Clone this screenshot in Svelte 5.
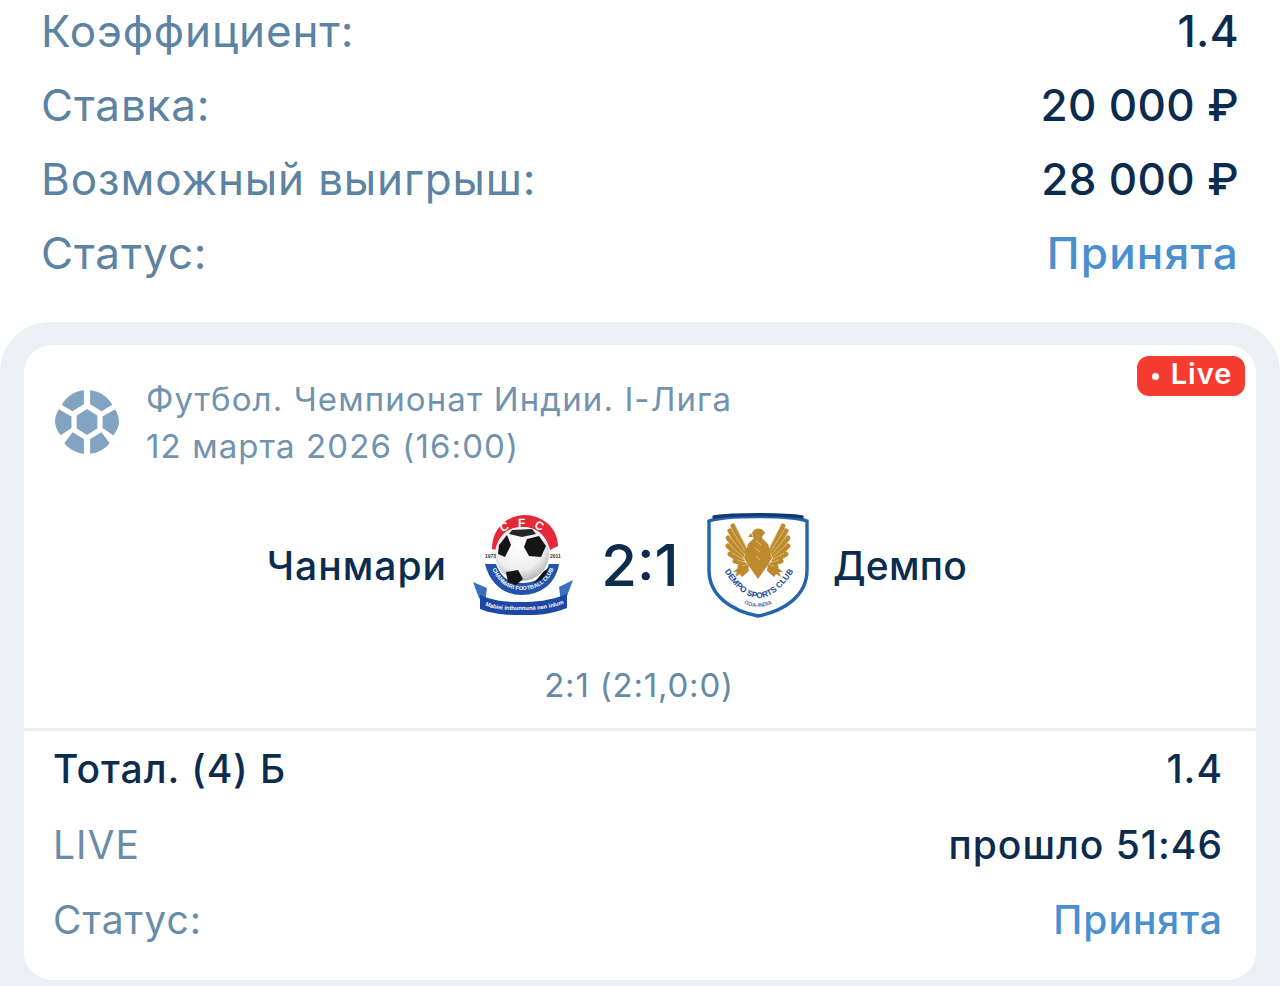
<script>
  const summary = [
    { label: 'Коэффициент:', value: '1.4', cls: '' },
    { label: 'Ставка:', value: '20 000 ₽', cls: '' },
    { label: 'Возможный выигрыш:', value: '28 000 ₽', cls: '' },
    { label: 'Статус:', value: 'Принята', cls: 'ok' }
  ];
  const feathers = [
    'M39 38 27 14', 'M37 40 24 19', 'M36 43 22 26', 'M35 46 22 34', 'M36 49 24 42', 'M38 52 29 49', 'M40 54 34 55'
  ];
</script>

<div class="page">
  <section class="summary">
    {#each summary as r}
      <div class="srow"><span class="slabel">{r.label}</span><span class="svalue {r.cls}">{r.value}</span></div>
    {/each}
  </section>

  <section class="outer">
    <div class="card">
      <span class="live"><i></i>Live</span>
      <div class="head">
        <svg class="sport" viewBox="0 0 64 64" width="66" height="66">
          <g fill="#82a4c2">
            <path d="M32 19.5 42 25.7V38.3L32 44.5 22 38.3V25.7Z"/>
            <path d="M29 1.2V14.8L17.8 21.6 7.5 15.3C11.8 7.6 20 1.8 29 1.2Z"/>
            <path d="M35 1.2C44 1.8 52.2 7.6 56.5 15.3L46.2 21.6 35 14.8Z"/>
            <path d="M4.8 19.6 16.9 26.6V37.8L6.6 44.8C3.2 41 1 36.6 1 31.5 1 27.3 2.4 23.3 4.8 19.6Z"/>
            <path d="M59.2 19.6C61.6 23.3 63 27.3 63 31.5 63 36.6 60.8 41 57.4 44.8L47.1 37.8V26.6Z"/>
            <path d="M18 42 29 48.6V62.8C22 62.2 15 58.6 10 52.6Z"/>
            <path d="M46 42 54 52.6C49 58.6 42 62.2 35 62.8V48.6Z"/>
          </g>
        </svg>
        <div class="meta">
          <div>Футбол. Чемпионат Индии. I-Лига</div>
          <div>12 марта 2026 (16:00)</div>
        </div>
      </div>

      <div class="match">
        <span class="team left">Чанмари</span>
        <svg class="logo" viewBox="0 0 104 106" width="104" height="106">
          <defs>
            <radialGradient id="ball" cx="45%" cy="35%" r="70%">
              <stop offset="0" stop-color="#ffffff"/>
              <stop offset=".65" stop-color="#eeeeee"/>
              <stop offset="1" stop-color="#a9a9a9"/>
            </radialGradient>
            <path id="cfcArc" d="M24 30C32 11 72 9 82 30" fill="none"/>
            <path id="ringArc" d="M22 56C30 76 44 78 52 78S76 76 84 56" fill="none"/>
            <path id="bandArc" d="M13 93C30 99 40 98 52 98S76 98 96 91" fill="none"/>
          </defs>
          <path d="M22 37C22 14 40 3 55 3S88 14 88 34L80 38C76 22 66 15 52 15S28 24 26 38Z" fill="#e42a38"/>
          <path d="M15 52H26C32 68 42 71 52 71S74 68 79 52H89C86 72 70 83 52 83S20 72 15 52Z" fill="#2552ab"/>
          <path d="M3 70 17 76 15 92 9 86Z" fill="#3b6fc2"/>
          <path d="M103 68 89 75 91 90 97 84Z" fill="#3b6fc2"/>
          <path d="M10 83C26 90 40 90 52 90S80 89 97 82V96C80 103 66 103 52 103S26 103 10 97Z" fill="#1c47a3"/>
          <circle cx="52" cy="42" r="27" fill="url(#ball)"/>
          <path d="M57 27 69 24 76 34 71 45 59 44 54 35Z" fill="#141414"/>
          <path d="M29 33 37 23 41 33 35 45 28 42Z" fill="#141414"/>
          <path d="M36 60 48 58 53 67 46 73 38 70Z" fill="#141414"/>
          <path d="M63 72 74 59 79 56 74 66Z" fill="#141414"/>
          <path d="M42 18 62 17 66 22 52 25 39 22Z" fill="#262626"/>
          <text class="cfc"><textPath href="#cfcArc" startOffset="50%" text-anchor="middle">C F C</textPath></text>
          <text class="ring"><textPath href="#ringArc" startOffset="50%" text-anchor="middle">CHANMARI FOOTBALL CLUB</textPath></text>
          <text class="motto"><textPath href="#bandArc" startOffset="50%" text-anchor="middle">Mabiei inthunnuna nen inlum</textPath></text>
          <text x="15" y="46" class="yr">1973</text>
          <text x="80" y="46" class="yr">2011</text>
        </svg>
        <span class="score">2:1</span>
        <svg class="logo" viewBox="0 0 104 106" width="104" height="106">
          <defs>
            <path id="dc" d="M19 60Q52 112 87 60" fill="none"/>
            <path id="dg" d="M35 90Q52 100 69 90" fill="none"/>
            <g id="half">
              {#each feathers as d}
                <path {d} stroke="#bd8a2f" stroke-width="5" stroke-linecap="round" fill="none"/>
              {/each}
              {#each feathers as d}
                <path {d} stroke="#e9cd8d" stroke-width=".7" fill="none" transform="translate(1.8 -1.2)"/>
              {/each}
              <path d="M50 24 42 32 38 46 44 56 50 60Z" fill="#bd8a2f"/>
              <path d="M42 53 33 55 27 60 31 60 29 65 34 62 36 65 43 59Z" fill="#bd8a2f"/>
            </g>
          </defs>
          <path d="M3 9C20 3 84 3 101 9V58C101 84 78 99 52 104 26 99 3 84 3 58Z" fill="#fff" stroke="#2463ad" stroke-width="3.4"/>
          <path d="M8 5C26 2 78 2 96 5" fill="none" stroke="#123a72" stroke-width="3.4" stroke-linecap="round"/>
          <use href="#half"/>
          <use href="#half" transform="translate(104 0) scale(-1 1)"/>
          <path d="M46 21C48 15 57 15 59 21L56 25V42L59 57 52 67 45 57 48 42V28Z" fill="#bd8a2f"/>
          <path d="M45 21 42 25 47 25Z" fill="#bd8a2f"/>
          <path d="M50 29 55 33M49 36 54 40M50 44 54 48" stroke="#e9cd8d" stroke-width=".8"/>
          <text class="demp"><textPath href="#dc" startOffset="50%" text-anchor="middle">DEMPO SPORTS CLUB</textPath></text>
          <text class="demp small"><textPath href="#dg" startOffset="50%" text-anchor="middle">GOA-INDIA</textPath></text>
        </svg>
        <span class="team right">Демпо</span>
      </div>

      <div class="sub">2:1 (2:1,0:0)</div>

      <div class="rows">
        <div class="row"><span class="dark">Тотал. (4) Б</span><span class="dark">1.4</span></div>
        <div class="row"><span class="muted">LIVE</span><span class="dark">прошло 51:46</span></div>
        <div class="row"><span class="muted">Статус:</span><span class="okv">Принята</span></div>
      </div>
    </div>
  </section>
</div>

<style>
  :global(body) { margin: 0; background: #fff; }
  .page { width: 1280px; height: 986px; overflow: hidden; font-family: Inter, "Noto Sans", sans-serif; background: #fff; display: flex; flex-direction: column; }
  .summary { padding: 0 41px; height: 316px; box-sizing: border-box; margin-top: -6px; flex: none; }
  .srow { display: flex; justify-content: space-between; align-items: center; height: 74px; font-size: 44px; line-height: 74px; letter-spacing: .85px; }
  .slabel { color: #5d83a3; }
  .svalue { color: #0c2c4f; font-weight: 500; letter-spacing: .35px; }
  .svalue.ok { color: #4a8fd0; letter-spacing: 1.25px; }
  .outer { background: #ecf0f4; border-radius: 50px 50px 0 0; padding: 23px 24px 6px; flex: 1; display: flex; margin-top: 12px; }
  .card { position: relative; flex: 1; background: #fff; border-radius: 28px; display: flex; flex-direction: column; }
  .live { position: absolute; top: 11px; right: 11px; width: 108px; height: 40px; box-sizing: border-box; padding: 0 0 6px 2px; border-radius: 12px; background: #f63c30; color: #fff; font-size: 29px; font-weight: 600; display: flex; align-items: center; justify-content: center; gap: 12px; letter-spacing: 1px; }
  .live i { width: 7px; height: 7px; border-radius: 50%; background: #fff; margin-top: 6px; }
  .head { display: flex; align-items: center; gap: 26px; padding: 33px 0 0 30px; height: 90px; }
  .sport { flex: none; margin-top: -2px; }
  .meta { color: #7293ae; font-size: 33px; line-height: 47px; letter-spacing: 1.1px; }
  .match { display: grid; grid-template-columns: 446px 104px 132px 104px auto; align-items: center; margin-top: 44px; height: 106px; }
  .team { color: #0c2c4f; font-size: 39px; font-weight: 500; }
  .team.left { justify-self: end; margin-right: 23px; letter-spacing: 1px; }
  .team.right { margin-left: 23px; letter-spacing: .2px; }
  .score { color: #0c2c4f; font-size: 58px; font-weight: 500; text-align: center; }
  .logo { display: block; }
  .logo text { font-family: "Liberation Sans", sans-serif; }
  .cfc { font-size: 12px; font-weight: 700; fill: #fff; letter-spacing: 2.5px; }
  .ring { font-size: 5.6px; font-weight: 700; fill: #fff; }
  .motto { font-size: 5.8px; font-weight: 700; fill: #fff; }
  .yr { font-size: 5px; fill: #333; font-weight: 700; }
  .demp { font-size: 8.2px; font-weight: 700; fill: #1c4a94; }
  .demp.small { font-size: 5.5px; fill: #4a6f9f; }
  .sub { color: #648aa8; font-size: 33px; text-align: center; margin-top: 46px; height: 42px; line-height: 42px; margin-left: -2px; letter-spacing: .8px; }
  .rows { border-top: 3px solid #e9edf2; margin-top: 22px; padding: 0 33px 0 29px; flex: 1; }
  .row { display: flex; justify-content: space-between; align-items: center; height: 75.5px; font-size: 39px; letter-spacing: 1px; }
  .dark { color: #0c2c4f; font-weight: 500; }
  .muted { color: #6a8ca8; }
  .okv { color: #4a8fd0; font-weight: 500; }
</style>
